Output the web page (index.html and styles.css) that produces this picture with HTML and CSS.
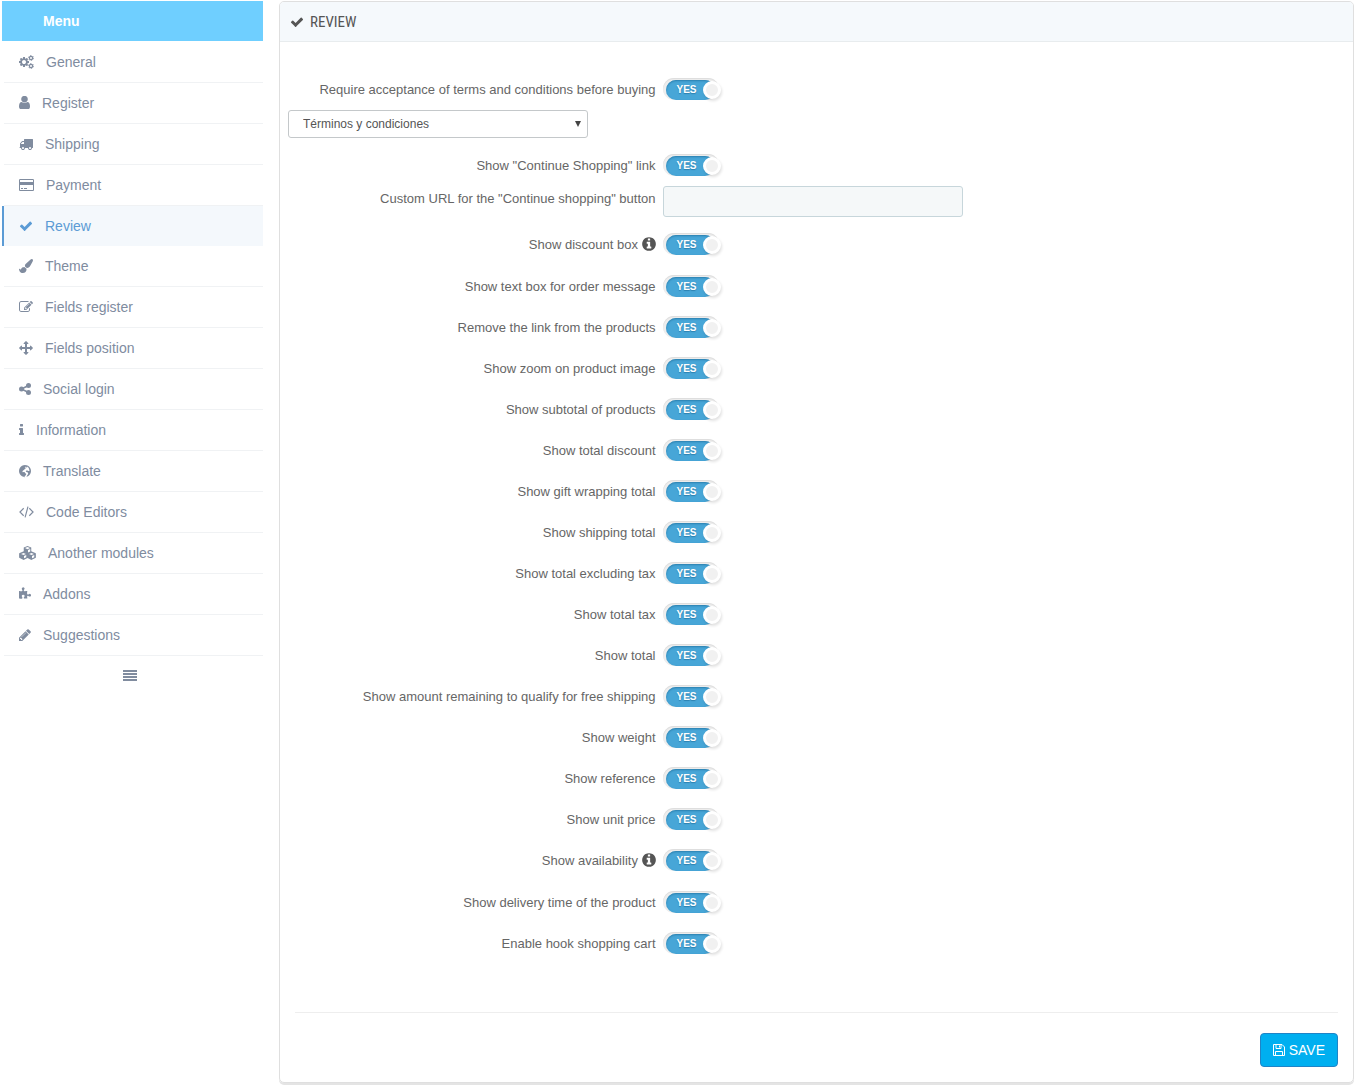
FILE: index.html
```html
<!DOCTYPE html>
<html lang="en">
<head>
<meta charset="utf-8">
<title>Review settings</title>
<link rel="stylesheet" href="styles.css">
</head>
<body>
<svg class="sprite" aria-hidden="true">
  <symbol id="check" viewBox="0 0 1792 1792"><path d="M1671 566q0 40-28 68l-724 724-136 136q-28 28-68 28t-68-28l-136-136-362-362q-28-28-28-68t28-68l136-136q28-28 68-28t68 28l294 295 656-657q28-28 68-28t68 28l136 136q28 28 28 68z"/></symbol>
  <symbol id="info-circle" viewBox="128 0 1536 1792"><path d="M1152 1376v-160q0-14-9-23t-23-9h-96v-512q0-14-9-23t-23-9h-320q-14 0-23 9t-9 23v160q0 14 9 23t23 9h96v320h-96q-14 0-23 9t-9 23v160q0 14 9 23t23 9h448q14 0 23-9t9-23zm-128-896v-160q0-14-9-23t-23-9h-192q-14 0-23 9t-9 23v160q0 14 9 23t23 9h192q14 0 23-9t9-23zm640 416q0 209-103 385.5t-279.5 279.5-385.5 103-385.5-103-279.5-279.5-103-385.5 103-385.5 279.5-279.5 385.5-103 385.5 103 279.5 279.5 103 385.5z"/></symbol>
</svg>
<div class="page">
  <nav class="sidebar" aria-label="Menu">
    <h2 class="sidebar-title">Menu</h2>
    <ul class="menu">
      <li><a href="#general"><svg class="icon w15" viewBox="0 0 1920 1792"><path fill-rule="evenodd" d="M896 896q0-106-75-181t-181-75-181 75-75 181 75 181 181 75 181-75 75-181zM1280 805v185q0 10-7 19.500t-16 10.500l-155 24q-11 35-32 76 34 48 90 115 7 11 7 20 0 12-7 19-23 30-82.500 89.500t-78.500 59.500q-11 0-21-7l-115-90q-37 19-77 31-11 108-23 155-7 24-30 24h-186q-11 0-20-7.500t-10-17.500l-23-153q-34-10-75-31l-118 89q-7 7-20 7-11 0-21-8-144-133-144-160 0-9 7-19 10-14 41-53t47-61q-23-44-35-82l-152-24q-10-1-17-9.500t-7-19.500v-185q0-10 7-19.500t16-10.500l155-24q11-35 32-76-34-48-90-115-7-11-7-20 0-12 7-20 22-30 82-89t79-59q11 0 21 7l115 90q34-18 77-32 11-108 23-154 7-24 30-24h186q11 0 20 7.500t10 17.500l23 153q34 10 75 31l118-89q8-7 20-7 11 0 21 8 144 133 144 160 0 8-7 19-12 16-42 54t-45 60q23 48 34 82l152 23q10 2 17 10.500t7 19.500z"/><g fill="none" stroke="currentColor"><circle cx="1536" cy="384" r="205" stroke-width="155"/><circle cx="1536" cy="384" r="320" stroke-width="110" stroke-dasharray="180 155"/><circle cx="1536" cy="1408" r="205" stroke-width="155"/><circle cx="1536" cy="1408" r="320" stroke-width="110" stroke-dasharray="180 155"/></g></svg>General</a></li>
      <li><a href="#register"><svg class="icon w11" viewBox="256 192 1280 1536"><path d="M1536 1399q0 109-62.500 187t-150.500 78h-854q-88 0-150.500-78t-62.500-187q0-85 8.500-160.500t31.500-152 58.500-131 94-89 134.500-34.500q131 128 313 128t313-128q76 0 134.500 34.500t94 89 58.500 131 31.500 152 8.500 160.500zm-256-887q0 159-112.500 271.500t-271.500 112.500-271.500-112.500-112.500-271.500 112.500-271.500 271.500-112.500 271.500 112.500 112.500 271.500z"/></svg>Register</a></li>
      <li><a href="#shipping"><svg class="icon w14" viewBox="0 0 1792 1792"><path fill-rule="evenodd" d="M640 1408q0-52-38-90t-90-38-90 38-38 90 38 90 90 38 90-38 38-90zm-384-512h384v-256h-158q-13 0-22 9l-195 195q-9 9-9 22v30zm1280 512q0-52-38-90t-90-38-90 38-38 90 38 90 90 38 90-38 38-90zm256-1088v1024q0 15-4 26.500t-13.500 18.500-16.500 11.500-23.500 6-22.500 2-25.500 0-22.500-.5q0 106-75 181t-181 75-181-75-75-181h-384q0 106-75 181t-181 75-181-75-75-181h-64q-3 0-22.500.5t-25.500 0-22.500-2-23.500-6-16.500-11.500-13.500-18.500-4-26.500q0-26 19-45t45-19v-320q0-8-.5-35t0-38 2.500-34.500 6.500-37 14-30.500 22.500-30l198-198q19-19 50.500-32t58.500-13h160v-192q0-26 19-45t45-19h1024q26 0 45 19t19 45z"/></svg>Shipping</a></li>
      <li><a href="#payment"><svg class="icon w15" viewBox="0 0 1920 1792"><path fill-rule="evenodd" d="M1760 128q66 0 113 47t47 113v1216q0 66-47 113t-113 47h-1600q-66 0-113-47t-47-113v-1216q0-66 47-113t113-47h1600zm-1600 128q-13 0-22.500 9.500t-9.500 22.500v224h1664v-224q0-13-9.500-22.500t-22.500-9.500h-1600zm1600 1280q13 0 22.500-9.500t9.500-22.500v-608h-1664v608q0 13 9.500 22.500t22.500 9.500h1600zm-1504-128v-128h256v128h-256zm384 0v-128h384v128h-384z"/></svg>Payment</a></li>
      <li class="active"><a href="#review" aria-current="page"><svg class="icon w14"><use href="#check"/></svg>Review</a></li>
      <li><a href="#theme"><svg class="icon w14" viewBox="0 0 1792 1792"><path d="M1615 0q70 0 122.500 46.500t52.500 116.500q0 63-45 151-332 629-465 752-97 91-218 91-126 0-216.500-92.500t-90.500-219.500q0-128 92-212l638-579q59-54 130-54zm-909 1034q39 76 106.500 130t150.500 76l1 71q4 213-129.500 347t-348.500 134q-123 0-218-46.500t-152.500-127.500-86.500-183-29-220q7 5 41 30t62 44.500 59 36.500 46 17q41 0 55-37 25-66 57.500-112.500t69.500-76 88-47.500 103-25.500 125-10.500z"/></svg>Theme</a></li>
      <li><a href="#fields-register"><svg class="icon w14" viewBox="0 0 1792 1792"><path fill-rule="evenodd" d="M888 1184l116-116-152-152-116 116v56h96v96h56zm440-720q-16-16-33 1l-350 350q-17 17-1 33t33-1l350-350q17-17 1-33zm80 594v190q0 119-84.500 203.500t-203.500 84.500h-832q-119 0-203.500-84.500t-84.500-203.500v-832q0-119 84.500-203.500t203.500-84.500h832q63 0 117 25 15 7 18 23 3 17-9 29l-49 49q-14 14-32 8-23-6-45-6h-832q-66 0-113 47t-47 113v832q0 66 47 113t113 47h832q66 0 113-47t47-113v-126q0-13 9-22l64-64q15-15 35-7t20 29zm-96-738l288 288-672 672h-288v-288zm444 132l-92 92-288-288 92-92q28-28 68-28t68 28l152 152q28 28 28 68t-28 68z"/></svg>Fields register</a></li>
      <li><a href="#fields-position"><svg class="icon w14" viewBox="0 0 1792 1792"><path d="M1792 896q0 26-19 45l-256 256q-19 19-45 19t-45-19-19-45v-128h-384v384h128q26 0 45 19t19 45-19 45l-256 256q-19 19-45 19t-45-19l-256-256q-19-19-19-45t19-45 45-19h128v-384h-384v128q0 26-19 45t-45 19-45-19l-256-256q-19-19-19-45t19-45l256-256q19-19 45-19t45 19 19 45v128h384v-384h-128q-26 0-45-19t-19-45 19-45l256-256q19-19 45-19t45 19l256 256q19 19 19 45t-19 45-45 19h-128v384h384v-128q0-26 19-45t45-19 45 19l256 256q19 19 19 45z"/></svg>Fields position</a></li>
      <li><a href="#social-login"><svg class="icon w12" viewBox="0 0 1536 1792"><path d="M1216 448L320 896l896 448" fill="none" stroke="currentColor" stroke-width="200"/><circle cx="1216" cy="448" r="320"/><circle cx="320" cy="896" r="320"/><circle cx="1216" cy="1344" r="320"/></svg>Social login</a></li>
      <li><a href="#information"><svg class="icon w5" viewBox="0 0 640 1792"><path d="M640 1344v128q0 26-19 45t-45 19h-512q-26 0-45-19t-19-45v-128q0-26 19-45t45-19h64v-384h-64q-26 0-45-19t-19-45v-128q0-26 19-45t45-19h384q26 0 45 19t19 45v576h64q26 0 45 19t19 45zM512 192v192q0 26-19 45t-45 19h-256q-26 0-45-19t-19-45v-192q0-26 19-45t45-19h256q26 0 45 19t19 45z"/></svg>Information</a></li>
      <li><a href="#translate"><svg class="icon w12" viewBox="128 0 1536 1792"><path fill-rule="evenodd" d="M896 128a768 768 0 1 0 .1 0zM1030 225q-70 20-50 60l85 65-60 65-95-30-50 70 110 30 40 65-145 85-95 130-140 60-25 110-60 30 60 90 125-40 155 55 25 110 115 35 30 95-75 130-130 145-60 105q160-10 320-105l65-160 120-150-10-140-90-70-120-40-80-90 75-95 140-20 110 60 115 10 35-60q-40-355-310-530l40 90-85 65-105-60z"/></svg>Translate</a></li>
      <li><a href="#code-editors"><svg class="icon w15" viewBox="0 0 1920 1792"><path d="M600 420L120 900l480 480M1320 420l480 480-480 480M1150 210L780 1580" fill="none" stroke="currentColor" stroke-width="150"/></svg>Code Editors</a></li>
      <li><a href="#modules"><svg class="icon w17" viewBox="80 0 2144 1792"><path fill-rule="evenodd" d="M1152 0l480 192v480l510 216q82 36 82 118v420q0 78-70 114l-448 224q-58 28-116 0l-438-218-438 218q-58 28-116 0l-448-224q-70-36-70-114v-420q0-82 78-118l514-216v-480zM1152 126l-330 142 330 142 330-142zM1216 522v294l288-124v-294zM640 892l-310 134 310 134 310-134zM704 1272v300l288-144v-280zM1664 892l-310 134 310 134 310-134zM1728 1272v300l288-144v-280z"/></svg>Another modules</a></li>
      <li><a href="#addons"><svg class="icon w12" viewBox="0 64 1664 1728"><path d="M1665 1100q0 81-44.500 135t-123.500 54q-41 0-77.500-17.500t-59-38-56.500-38-71-17.500q-110 0-110 124 0 39 16 115t15 115v5q-22 0-33 1-34 3-97.500 11.500t-115.500 13.500-98 5q-61 0-103-26.500t-42-83.500q0-37 17.500-71t38-56.500 38-59 17.500-77.500q0-79-54-123.500t-135-44.500q-84 0-143 45.500t-59 127.500q0 43 15 83t33.500 64.500 33.500 53 15 50.500q0 45-46 89-37 35-117 35-95 0-245-24-9-2-27.500-4t-27.500-4l-13-2q-1 0-3-1-2 0-2-1v-1024q2 1 17.500 3.500t34 5 21.500 3.500q150 24 245 24 80 0 117-35 46-44 46-89 0-22-15-50.500t-33.500-53-33.500-64.500-15-83q0-82 59-127.500t144-45.500q80 0 134 44.500t54 123.500q0 41-17.500 77.500t-38 59-38 56.500-17.500 71q0 57 42 83.500t103 26.500q64 0 180-15t163-17v2q-1 2-3.500 17.500t-5 34-3.500 21.500q-24 150-24 245 0 80 35 117 44 46 89 46 22 0 50.500-15t53-33.500 64.500-33.500 83-15q82 0 127.500 59t45.500 143z"/></svg>Addons</a></li>
      <li><a href="#suggestions"><svg class="icon w12" viewBox="128 0 1536 1792"><path fill-rule="evenodd" d="M491 1536l91-91-235-235-91 91v107h128v128h107zm523-928q0-22-22-22-10 0-17 7l-542 542q-7 7-7 17 0 22 22 22 10 0 17-7l542-542q7-7 7-17zm-54-192l416 416-832 832h-416v-416zm683 96q0 53-37 90l-166 166-416-416 166-165q36-38 90-38 53 0 91 38l235 234q37 39 37 91z"/></svg>Suggestions</a></li>
    </ul>
    <button class="collapse" type="button" aria-label="Collapse menu"><svg class="icon w14" viewBox="0 0 14 14"><path d="M0 2h14v2H0zM0 5h14v2H0zM0 8h14v2H0zM0 11h14v2H0z"/></svg></button>
  </nav>

  <main class="panel">
    <h1 class="panel-heading"><svg class="icon w14"><use href="#check"/></svg>REVIEW</h1>
    <form class="form">
      <div class="row tight"><label for="f1">Require acceptance of terms and conditions before buying</label><span class="switch"><input type="checkbox" id="f1" checked><span class="switch-text">YES</span></span></div>
      <div class="select-box"><select aria-label="Terms page"><option>Términos y condiciones</option></select></div>
      <div class="row tight"><label for="f2">Show "Continue Shopping" link</label><span class="switch"><input type="checkbox" id="f2" checked><span class="switch-text">YES</span></span></div>
      <div class="row field"><label for="f3">Custom URL for the "Continue shopping" button</label><input class="text-input" type="text" id="f3"></div>
      <div class="row with-info"><label for="f4">Show discount box <svg class="icon w14 info"><use href="#info-circle"/></svg></label><span class="switch"><input type="checkbox" id="f4" checked><span class="switch-text">YES</span></span></div>
      <div class="row"><label for="f5">Show text box for order message</label><span class="switch"><input type="checkbox" id="f5" checked><span class="switch-text">YES</span></span></div>
      <div class="row"><label for="f6">Remove the link from the products</label><span class="switch"><input type="checkbox" id="f6" checked><span class="switch-text">YES</span></span></div>
      <div class="row"><label for="f7">Show zoom on product image</label><span class="switch"><input type="checkbox" id="f7" checked><span class="switch-text">YES</span></span></div>
      <div class="row"><label for="f8">Show subtotal of products</label><span class="switch"><input type="checkbox" id="f8" checked><span class="switch-text">YES</span></span></div>
      <div class="row"><label for="f9">Show total discount</label><span class="switch"><input type="checkbox" id="f9" checked><span class="switch-text">YES</span></span></div>
      <div class="row"><label for="f10">Show gift wrapping total</label><span class="switch"><input type="checkbox" id="f10" checked><span class="switch-text">YES</span></span></div>
      <div class="row"><label for="f11">Show shipping total</label><span class="switch"><input type="checkbox" id="f11" checked><span class="switch-text">YES</span></span></div>
      <div class="row"><label for="f12">Show total excluding tax</label><span class="switch"><input type="checkbox" id="f12" checked><span class="switch-text">YES</span></span></div>
      <div class="row"><label for="f13">Show total tax</label><span class="switch"><input type="checkbox" id="f13" checked><span class="switch-text">YES</span></span></div>
      <div class="row"><label for="f14">Show total</label><span class="switch"><input type="checkbox" id="f14" checked><span class="switch-text">YES</span></span></div>
      <div class="row"><label for="f15">Show amount remaining to qualify for free shipping</label><span class="switch"><input type="checkbox" id="f15" checked><span class="switch-text">YES</span></span></div>
      <div class="row"><label for="f16">Show weight</label><span class="switch"><input type="checkbox" id="f16" checked><span class="switch-text">YES</span></span></div>
      <div class="row"><label for="f17">Show reference</label><span class="switch"><input type="checkbox" id="f17" checked><span class="switch-text">YES</span></span></div>
      <div class="row"><label for="f18">Show unit price</label><span class="switch"><input type="checkbox" id="f18" checked><span class="switch-text">YES</span></span></div>
      <div class="row with-info"><label for="f19">Show availability <svg class="icon w14 info"><use href="#info-circle"/></svg></label><span class="switch"><input type="checkbox" id="f19" checked><span class="switch-text">YES</span></span></div>
      <div class="row"><label for="f20">Show delivery time of the product</label><span class="switch"><input type="checkbox" id="f20" checked><span class="switch-text">YES</span></span></div>
      <div class="row"><label for="f21">Enable hook shopping cart</label><span class="switch"><input type="checkbox" id="f21" checked><span class="switch-text">YES</span></span></div>
      <div class="actions"><button class="save" type="submit"><svg class="icon w12" viewBox="0 0 12 14"><path d="M.5 1.500h8.500l2.500 2.500v8.500H.5zM3 1.500v4h5v-4M2.500 12.500v-4h7v4M6.500 2.500v2" fill="none" stroke="currentColor"/></svg>SAVE</button></div>
    </form>
  </main>
</div>
</body>
</html>
```
FILE: styles.css
```css
* {
  box-sizing: border-box;
}

body {
  margin: 0;
  background: #fff;
  font-family: "Liberation Sans", Arial, sans-serif;
  font-size: 13px;
  color: #666;
}

.sprite {
  display: none;
}

.page {
  display: flex;
  align-items: flex-start;
  gap: 16px;
  padding: 1px 2px 4px;
}

.icon {
  flex: none;
  height: 14px;
  fill: currentColor;
}

.w5 { width: 5px; }
.w11 { width: 11px; }
.w12 { width: 12px; }
.w14 { width: 14px; }
.w15 { width: 15px; }
.w17 { width: 17px; }

/* Sidebar */

.sidebar {
  flex: 0 0 261px;
  display: flex;
  flex-direction: column;
  font-size: 14px;
  color: #808c9f;
}

.sidebar-title {
  margin: 0 0 1px;
  padding-left: 41px;
  background: #6fcfff;
  color: #fff;
  font-size: 14px;
  line-height: 40px;
}

.menu {
  margin: 0;
  padding: 0;
  list-style: none;
}

.menu li {
  border-left: 2px solid transparent;
}

.menu a {
  display: flex;
  align-items: center;
  gap: 12px;
  height: 41px;
  padding-left: 15px;
  border-bottom: 1px solid #f0f2f4;
  color: inherit;
  text-decoration: none;
}

.menu .active {
  border-color: #5b9bd5;
  background: #f4f8fc;
  color: #5b9bd5;
}

.menu .active a {
  height: 40px;
  border-bottom: 0;
}

.collapse {
  align-self: center;
  display: flex;
  padding: 12px 18px 12px 12px;
  border: 0;
  background: none;
  color: inherit;
}

/* Panel */

.panel {
  flex: 1;
  min-width: 0;
  border: 1px solid #dfdfdf;
  border-radius: 5px;
  box-shadow: 0 2px 0 #e4e4e4;
}

.panel-heading {
  display: flex;
  align-items: center;
  gap: 6px;
  height: 40px;
  margin: 0;
  padding-left: 10px;
  border-bottom: 1px solid #e8ecee;
  border-radius: 4px 4px 0 0;
  background: #f5f9fc;
  color: #555;
  font-family: "Liberation Sans Narrow", "Roboto Condensed", Roboto, sans-serif;
  font-size: 15px;
  font-weight: 400;
}

.form {
  padding: 36px 15px 15px 8px;
}

.row {
  display: grid;
  grid-template-columns: 35% 1fr;
  column-gap: 7px;
  align-items: start;
  margin-bottom: 18px;
}

.row.tight {
  margin-bottom: 9px;
}

.row label {
  line-height: 23px;
  text-align: right;
}

.row.field {
  margin-bottom: 16px;
}

.row.field label {
  line-height: 25px;
}

.row.with-info {
  grid-template-rows: 24px;
}

.info {
  height: 16px;
  vertical-align: -3px;
  color: #555;
}

.select-box {
  position: relative;
  width: 300px;
  margin-bottom: 16px;
}

.select-box::after {
  content: "";
  position: absolute;
  top: 11px;
  right: 7px;
  width: 6px;
  height: 6px;
  background: #444;
  clip-path: polygon(0 0, 100% 0, 50% 100%);
}

.select-box select {
  display: block;
  width: 100%;
  height: 28px;
  padding: 0 14px;
  appearance: none;
  border: 1px solid #c4c8ca;
  border-radius: 3px;
  background: #fff;
  color: #555;
  font: 12px "Liberation Sans", Arial, sans-serif;
}

.text-input {
  width: 300px;
  height: 31px;
  padding: 0 8px;
  border: 1px solid #c7d6db;
  border-radius: 3px;
  background: #f5f8f9;
  font: inherit;
}

/* Toggle: grey track, blue fill with its caption, white knob on top */

.switch {
  position: relative;
  width: 58px;
  height: 23px;
}

.switch input {
  display: block;
  width: 56px;
  height: 22px;
  margin: 0;
  appearance: none;
  border-radius: 11px;
  background: #eee;
  box-shadow: inset 0 1px 1px #dcdcdc;
}

.switch-text {
  position: absolute;
  top: 2px;
  left: 3px;
  width: 49px;
  height: 20px;
  padding-left: 11px;
  border-radius: 10px;
  background: #47a6d7;
  box-shadow: inset 0 1px 2px #2b7fae;
  color: #fff;
  font-size: 10px;
  font-weight: 700;
  line-height: 20px;
  text-shadow: 0 1px 1px #2b7fae;
  pointer-events: none;
}

.switch::after {
  content: "";
  position: absolute;
  z-index: 1;
  top: 3px;
  left: 40px;
  box-sizing: border-box;
  width: 18px;
  height: 18px;
  border: 3px solid #fff;
  border-radius: 50%;
  background: #f1f1f1;
  box-shadow: 1px 2px 3px rgba(0, 0, 0, 0.12);
  pointer-events: none;
}

.actions {
  display: flex;
  justify-content: flex-end;
  margin: 57px 0 0 7px;
  padding-top: 20px;
  border-top: 1px solid #eee;
}

.save {
  display: flex;
  align-items: center;
  gap: 4px;
  height: 34px;
  padding: 0 12px;
  border: 1px solid #1f84c7;
  border-radius: 4px;
  background: #00aff0;
  color: #fff;
  font: 14px "Liberation Sans", Arial, sans-serif;
}
```
